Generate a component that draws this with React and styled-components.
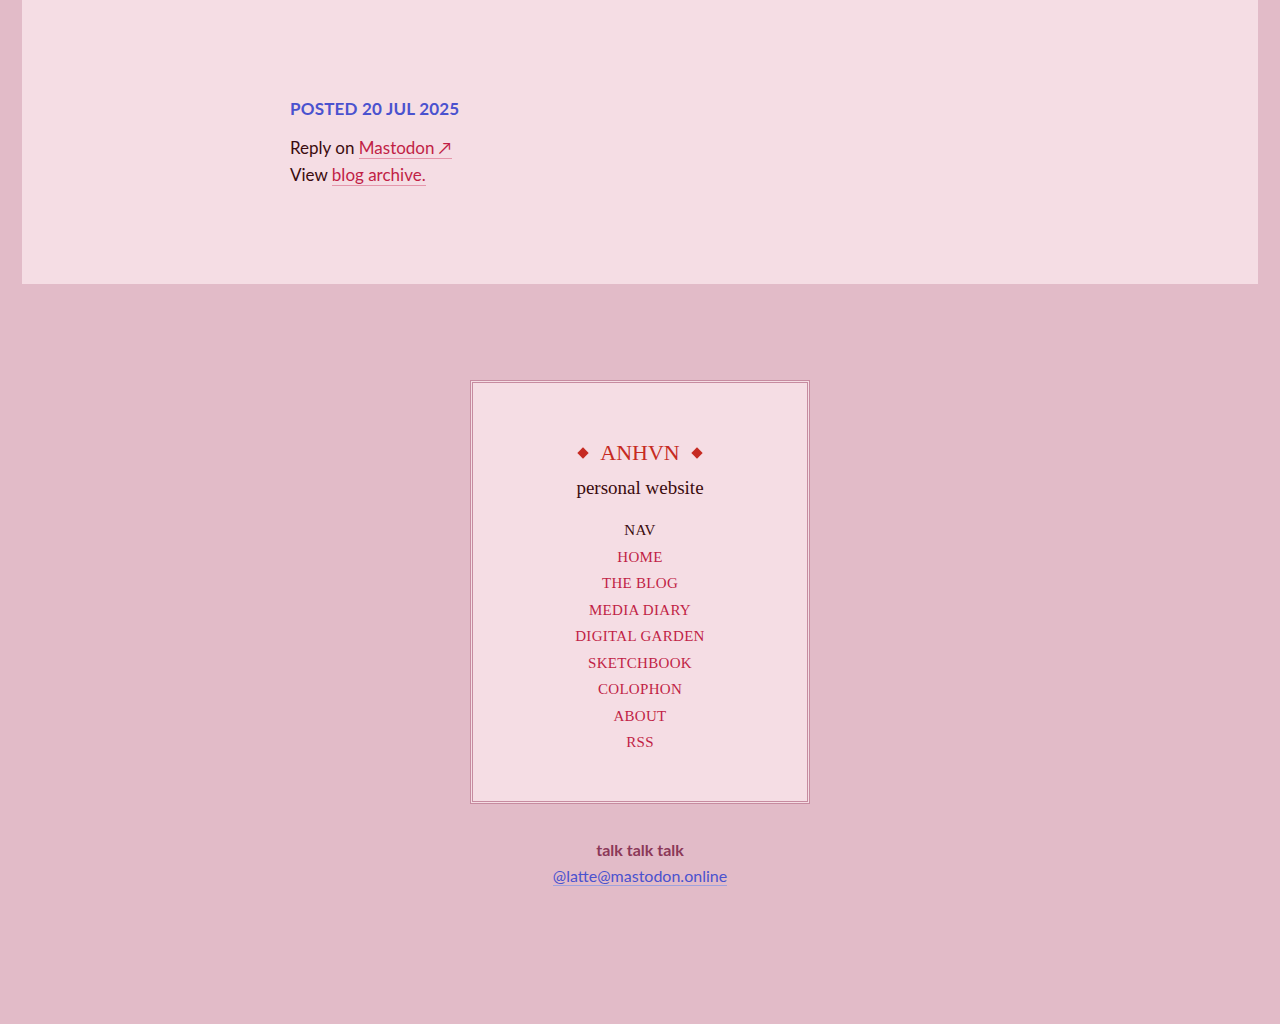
import styled, { createGlobalStyle } from "styled-components";

const GlobalStyle = createGlobalStyle`
  html, body {
    margin: 0;
    padding: 0;
    background: #e2bbc8;
  }
  body {
    font-family: Lato, "Noto Sans", sans-serif;
    color: #3b0b0e;
  }
`;

const Page = styled.div`
  min-height: 1024px;
  padding: 0 22px;
`;

const Card = styled.main`
  background: #f5dde4;
  height: 284px;
  box-sizing: border-box;
  padding-top: 98px;
`;

const Column = styled.div`
  width: 700px;
  margin: 0 auto;
`;

const Posted = styled.h3`
  margin: 0 0 14px;
  font-size: 17px;
  font-weight: 700;
  letter-spacing: 0.2px;
  color: #4a52cf;
  text-transform: uppercase;
  line-height: 22px;
`;

const Line = styled.p`
  margin: 0;
  font-size: 17px;
  line-height: 27px;
`;

const Link = styled.a`
  color: ${(p) => (p.$blue ? "#4a52cf" : "#c11f46")};
  text-decoration: none;
  border-bottom: 1px solid ${(p) => (p.$blue ? "#9ea2dd" : "#e596ab")};
`;

const Footer = styled.footer`
  display: flex;
  flex-direction: column;
  align-items: center;
  padding-top: 96px;
`;

const Box = styled.div`
  width: 340px;
  box-sizing: border-box;
  border: 3px double #c68ba0;
  background: #f5dde4;
  padding: 55px 0 45px;
  display: flex;
  flex-direction: column;
  align-items: center;
  font-family: "Liberation Serif", "DejaVu Serif", serif;
`;

const Title = styled.div`
  display: flex;
  align-items: center;
  gap: 13px;
  color: #c62a22;
  font-size: 22px;
  line-height: 30px;
`;

const Diamond = styled.span`
  width: 8px;
  height: 8px;
  background: #c62a22;
  transform: rotate(45deg);
`;

const Subtitle = styled.div`
  font-size: 19px;
  line-height: 26px;
  margin-top: 7px;
  color: #3b0b0e;
`;

const Nav = styled.nav`
  margin-top: 16px;
  display: flex;
  flex-direction: column;
  align-items: center;
`;

const NavItem = styled.a`
  font-size: 15px;
  line-height: 26.5px;
  letter-spacing: 0.3px;
  text-transform: uppercase;
  text-decoration: none;
  color: ${(p) => (p.$label ? "#3b0b0e" : "#c11f46")};
`;

const Talk = styled.div`
  margin-top: 33px;
  text-align: center;
  font-size: 16px;
  line-height: 26px;
`;

const TalkLabel = styled.div`
  font-weight: 700;
  color: #8c3858;
`;

const navItems = [
  "Home",
  "The Blog",
  "Media Diary",
  "Digital Garden",
  "Sketchbook",
  "Colophon",
  "About",
  "RSS",
];

export default function App() {
  return (
    <>
      <GlobalStyle />
      <Page>
        <Card>
          <Column>
            <Posted>Posted 20 Jul 2025</Posted>
            <Line>
              Reply on <Link href="#">Mastodon ↗</Link>
            </Line>
            <Line>
              View <Link href="#">blog archive.</Link>
            </Line>
          </Column>
        </Card>
        <Footer>
          <Box>
            <Title>
              <Diamond />
              ANHVN
              <Diamond />
            </Title>
            <Subtitle>personal website</Subtitle>
            <Nav>
              <NavItem $label as="span">
                Nav
              </NavItem>
              {navItems.map((item) => (
                <NavItem key={item} href="#">
                  {item}
                </NavItem>
              ))}
            </Nav>
          </Box>
          <Talk>
            <TalkLabel>talk talk talk</TalkLabel>
            <Link $blue href="#">
              @latte@mastodon.online
            </Link>
          </Talk>
        </Footer>
      </Page>
    </>
  );
}
